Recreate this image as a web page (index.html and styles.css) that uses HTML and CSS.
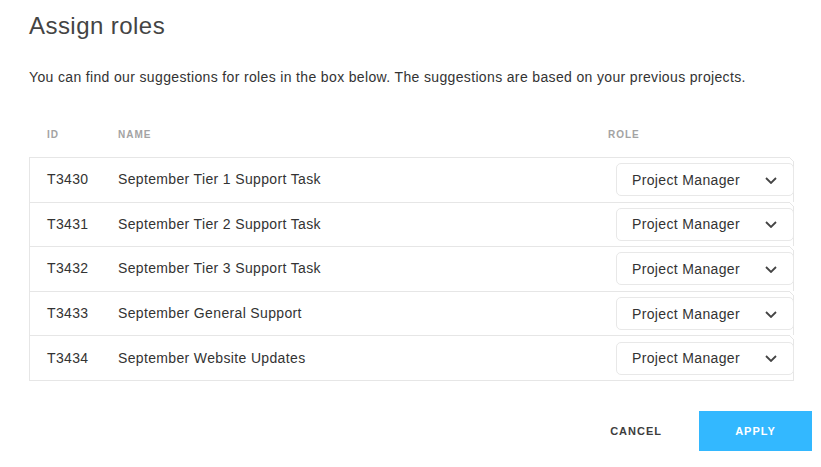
FILE: index.html
```html
<!DOCTYPE html>
<html lang="en">
<head>
<meta charset="utf-8">
<title>Assign roles</title>
<link rel="stylesheet" href="styles.css">
</head>
<body>
<div class="dialog">
  <h1 class="title">Assign roles</h1>
  <p class="intro">You can find our suggestions for roles in the box below. The suggestions are based on your previous projects.</p>

  <div class="table-head">
    <span>ID</span>
    <span>NAME</span>
    <span class="head-role">ROLE</span>
  </div>

  <div class="table">
    <div class="row">
      <span class="cell-id">T3430</span>
      <span class="cell-name">September Tier 1 Support Task</span>
      <div class="select"><span>Project Manager</span><svg class="chev" width="12" height="7" viewBox="0 0 12 7"><path d="M1 1l5 5 5-5" fill="none" stroke="#444" stroke-width="1.8"/></svg></div>
    </div>
    <div class="row">
      <span class="cell-id">T3431</span>
      <span class="cell-name">September Tier 2 Support Task</span>
      <div class="select"><span>Project Manager</span><svg class="chev" width="12" height="7" viewBox="0 0 12 7"><path d="M1 1l5 5 5-5" fill="none" stroke="#444" stroke-width="1.8"/></svg></div>
    </div>
    <div class="row">
      <span class="cell-id">T3432</span>
      <span class="cell-name">September Tier 3 Support Task</span>
      <div class="select"><span>Project Manager</span><svg class="chev" width="12" height="7" viewBox="0 0 12 7"><path d="M1 1l5 5 5-5" fill="none" stroke="#444" stroke-width="1.8"/></svg></div>
    </div>
    <div class="row">
      <span class="cell-id">T3433</span>
      <span class="cell-name">September General Support</span>
      <div class="select"><span>Project Manager</span><svg class="chev" width="12" height="7" viewBox="0 0 12 7"><path d="M1 1l5 5 5-5" fill="none" stroke="#444" stroke-width="1.8"/></svg></div>
    </div>
    <div class="row">
      <span class="cell-id">T3434</span>
      <span class="cell-name">September Website Updates</span>
      <div class="select"><span>Project Manager</span><svg class="chev" width="12" height="7" viewBox="0 0 12 7"><path d="M1 1l5 5 5-5" fill="none" stroke="#444" stroke-width="1.8"/></svg></div>
    </div>
  </div>

  <div class="actions">
    <button class="btn btn-cancel" type="button">CANCEL</button>
    <button class="btn btn-apply" type="button">APPLY</button>
  </div>
</div>
</body>
</html>
```

FILE: styles.css
```css
* {
  box-sizing: border-box;
}

html, body {
  margin: 0;
  background: #fff;
}

body {
  font-family: "Liberation Sans", Arial, sans-serif;
  color: #333;
}

.dialog {
  width: 821px;
  padding: 12px 9px 0 29px;
}

.title {
  margin: 0;
  font-size: 24px;
  line-height: 28px;
  font-weight: 400;
  letter-spacing: 0.45px;
  color: #444;
}

.intro {
  margin: 27px 0 0;
  font-size: 14px;
  line-height: 20px;
  letter-spacing: 0.35px;
  color: #333;
}

/* column captions above the table */
.table-head {
  display: grid;
  grid-template-columns: 71px 1fr 178px;
  margin: 40px 18px 0 0;
  padding-left: 18px;
  height: 30px;
  font-size: 10px;
  line-height: 16px;
  font-weight: 700;
  letter-spacing: 1px;
  color: #a3a3a3;
}

.head-role {
  margin-left: -8px;
}

.table {
  margin-right: 18px;
  border: 1px solid #e6e6e6;
  border-top: 0;
}

.row {
  position: relative;
  display: grid;
  grid-template-columns: 71px 1fr 178px;
  align-items: center;
  height: 44.6px;
  padding-left: 17px;
  border-top: 1px solid #e6e6e6;
  font-size: 14px;
  letter-spacing: 0.35px;
  color: #333;
}

/* small chamfer on the top-right corner of each row */
.row::after {
  content: "";
  position: absolute;
  top: -1px;
  right: -1px;
  width: 5px;
  height: 5px;
  background: linear-gradient(to bottom left, #fff 0, #fff calc(50% - 0.7px), #e6e6e6 50%, transparent calc(50% + 0.7px));
}

.cell-id,
.cell-name {
  margin-top: -1px;
}

.select {
  justify-self: end;
  width: 178px;
  height: 33px;
  margin-right: -1px;
  display: flex;
  align-items: center;
  justify-content: space-between;
  padding: 0 16px 0 15px;
  border: 1px solid #e8e8e8;
  border-radius: 5px;
  background: #fff;
  font-size: 14px;
  color: #333;
  position: relative;
  z-index: 1;
}

.chev {
  display: block;
  margin-top: 1px;
}

.actions {
  display: flex;
  justify-content: flex-end;
  align-items: center;
  margin-top: 30px;
}

.btn {
  font-family: "Liberation Sans", Arial, sans-serif;
  font-size: 11px;
  font-weight: 700;
  letter-spacing: 1px;
  border: 0;
  height: 40px;
  cursor: pointer;
}

.btn-cancel {
  background: transparent;
  color: #3d3d3d;
  padding: 0 18px;
  margin-right: 19px;
}

.btn-apply {
  width: 113px;
  background: #33b8ff;
  color: #fff;
}
```
